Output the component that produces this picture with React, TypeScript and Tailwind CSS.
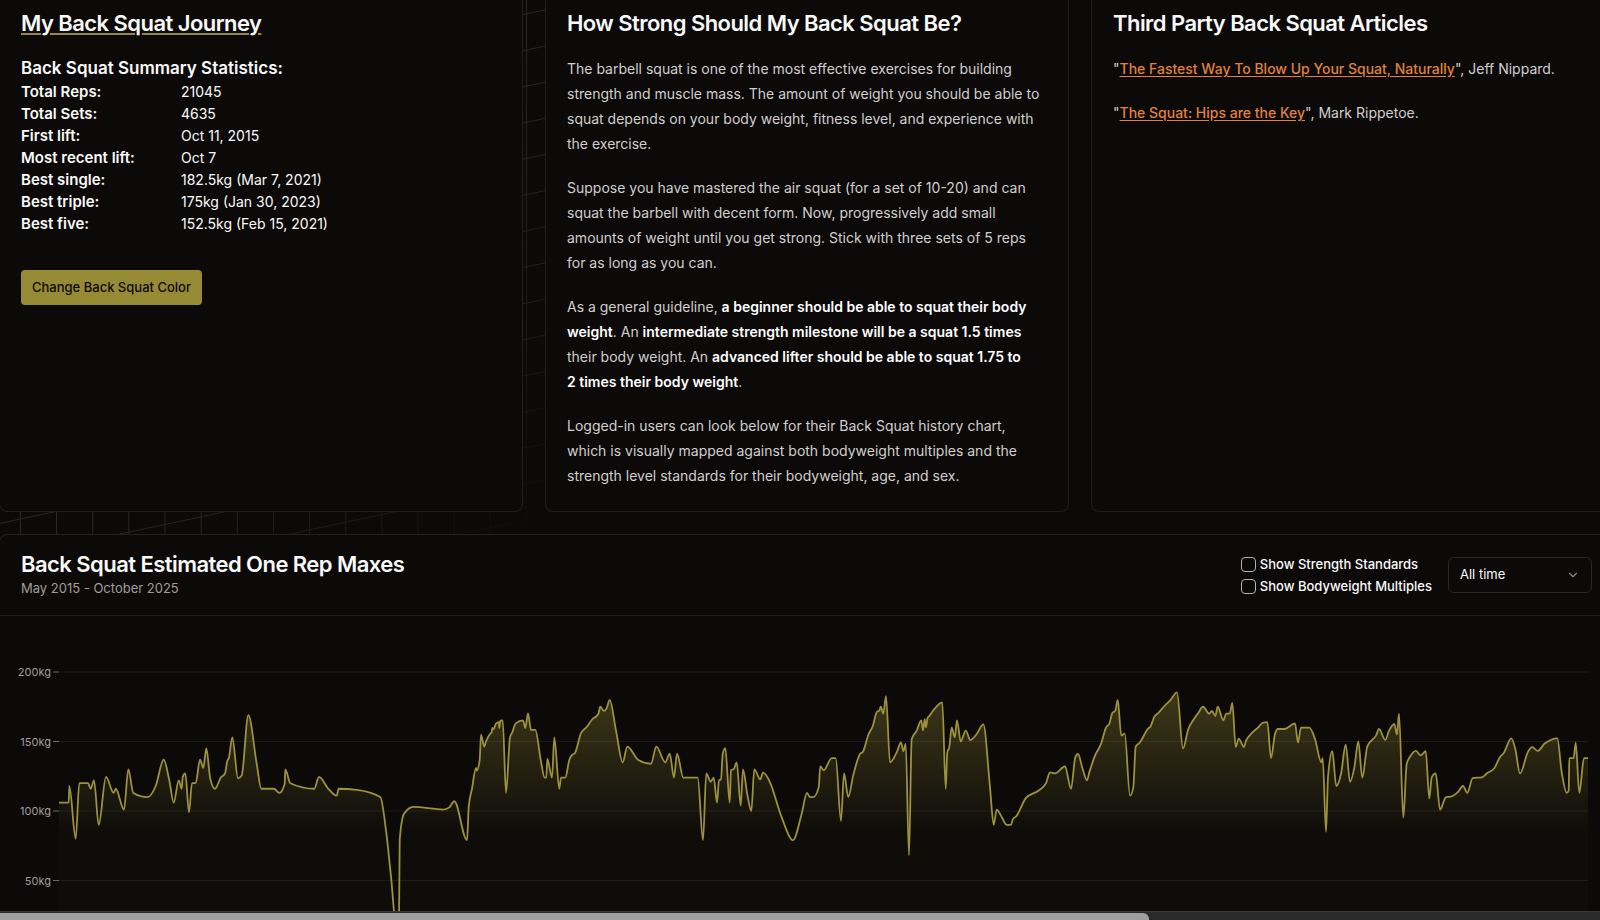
import React from 'react';
import { ChevronDown } from 'lucide-react';

const STATS: { label: string; value: string }[] = [
  { label: 'Total Reps:', value: '21045' },
  { label: 'Total Sets:', value: '4635' },
  { label: 'First lift:', value: 'Oct 11, 2015' },
  { label: 'Most recent lift:', value: 'Oct 7' },
  { label: 'Best single:', value: '182.5kg (Mar 7, 2021)' },
  { label: 'Best triple:', value: '175kg (Jan 30, 2023)' },
  { label: 'Best five:', value: '152.5kg (Feb 15, 2021)' },
];

// [x position, estimated one rep max in kg]
const E1RM: [number, number][] = [
  [59, 106], [68.7, 106], [69.3, 118], [75.7, 80], [79.3, 120], [88, 120], [90.7, 116], [94, 122], [98.7, 90],
  [106, 124.5], [113.7, 113], [115.7, 116], [124, 101], [128.3, 130], [133.3, 113], [147.7, 110], [155.7, 118],
  [163.7, 137], [169.3, 122], [173.7, 106], [178.7, 122], [181.7, 116], [182.7, 124.5], [185.3, 127], [189, 99],
  [192, 120], [195.7, 120], [200, 137], [203.3, 131], [206.3, 145], [210.3, 123], [215, 116], [220.7, 124],
  [225, 127], [227.3, 136], [229, 138.5], [232.3, 153], [238, 123.5], [241.7, 125.5], [248.3, 169], [256.7, 134],
  [261.3, 116], [274, 116], [279.3, 113], [284.7, 119.5], [285.3, 130], [290.3, 120], [314.3, 116], [319, 124.5],
  [328.3, 116], [336.7, 111], [338.7, 116], [356.7, 115.2], [380.3, 110], [386, 86], [390.7, 55], [396.7, 15],
  [399, 20], [399.7, 79], [404, 98], [413.3, 103], [443.3, 101], [449.3, 102.6], [454.3, 107], [467, 79],
  [468.7, 102.6], [472, 116], [476, 131], [476.7, 129], [479.7, 136.7], [481, 155], [484.3, 146.3], [486, 150],
  [490, 155.4], [491.7, 156.6], [492.3, 159.7], [493.7, 159], [495.7, 162.6], [498.7, 164], [499.3, 159.7],
  [500.3, 165], [502.7, 165.2], [506, 113], [510, 153], [512.3, 156.6], [515.7, 163], [523, 165.2], [525.3, 159.7],
  [528, 170.3], [531, 158.3], [535.3, 158.3], [540.7, 136.7], [544.7, 124], [546.3, 124], [547.3, 137.4], [552, 124],
  [554.3, 153], [559.3, 116], [561, 124], [565.3, 124], [569.3, 136.7], [572.3, 140.5], [574.7, 141.5], [581, 156],
  [586.7, 160.4], [592.3, 166], [598.3, 169.8], [600.3, 175], [604, 172], [606.7, 174], [609.7, 180], [616, 157.8],
  [622.7, 135], [627.3, 146.3], [638.3, 136.7], [651, 134], [656.3, 146.3], [665.3, 135], [669.7, 141.2], [674, 124],
  [677, 141.2], [683.3, 124], [697.7, 124], [703, 79], [706.3, 127], [710.7, 121], [713.7, 124], [717, 106],
  [719, 122.3], [721, 122.5], [722.7, 141], [725.3, 145.3], [729.7, 106], [731, 129.5], [733.7, 130], [736.7, 135],
  [740.7, 103.8], [743, 130], [747.3, 112], [751.3, 100], [754.3, 130], [760.3, 122.8], [763, 127.6], [770, 120.6],
  [781.7, 95.4], [793, 79], [801.7, 98], [807, 113], [810, 110], [813.3, 110], [818.7, 117], [820.3, 132],
  [823.7, 129.3], [831.7, 138], [835.7, 138], [841, 92.8], [844, 127], [848.3, 110], [853.3, 126], [860, 141],
  [863, 142.7], [868.3, 154.7], [872.7, 161], [877, 171.5], [879.3, 172.2], [880.7, 175], [883.3, 170], [886, 182.7],
  [890, 135], [896.7, 142.2], [901, 149.4], [903.3, 143], [905.7, 148.2], [909, 68], [911.7, 151.8], [916.7, 157.8],
  [921.3, 165.2], [923, 158], [924.7, 166], [926, 160.2], [927.7, 167.1], [929.3, 168.3], [933.3, 172.4],
  [942.3, 178.2], [945.7, 116], [947.3, 142.2], [949.3, 145.8], [951.7, 160.2], [954.7, 153], [957, 165.2],
  [960.7, 150], [965.7, 157.8], [970.3, 151], [976.7, 155.4], [983.3, 162.3], [990, 117], [993.7, 90], [996.7, 101],
  [1001.7, 95.7], [1006.7, 90], [1011, 90], [1012.7, 93.8], [1016.7, 96.6], [1026, 109.4], [1038.3, 114.6],
  [1046, 120], [1050, 127.8], [1055, 127], [1065, 132], [1071, 116], [1075.3, 138.6], [1078, 141], [1082.7, 130],
  [1087, 122], [1089.3, 127.8], [1095, 139.8], [1100.7, 147.7], [1106, 160], [1109.3, 162.6], [1112.3, 170.5],
  [1115.3, 172.2], [1117.7, 180], [1121.3, 154.2], [1124.7, 155.6], [1130, 111], [1133.3, 117], [1135.7, 146.3],
  [1140, 149.4], [1147.7, 159], [1150.7, 161], [1154, 167.4], [1158.3, 170.5], [1165, 176], [1170, 179.4],
  [1177, 185.4], [1183, 145], [1188.3, 159], [1193.3, 165.5], [1198.3, 170.5], [1203, 175], [1209.3, 170],
  [1212, 172], [1215.3, 168.3], [1217.7, 175], [1223.3, 165.2], [1226.3, 170], [1229.7, 170], [1232.3, 177.7],
  [1235.7, 146], [1238.7, 152], [1244, 146], [1246, 150.6], [1251.7, 156], [1258.3, 160.2], [1262.3, 163.3],
  [1267.3, 164], [1271, 138], [1275, 155.4], [1278, 159], [1284.3, 159], [1295, 163], [1298, 149.2], [1301, 160],
  [1309.3, 160], [1315, 151.8], [1321.3, 135], [1322.7, 138], [1326, 85], [1328, 124.2], [1332.3, 143],
  [1336.3, 118], [1341, 126.6], [1345.7, 147.7], [1350, 121], [1354.3, 131], [1358.3, 150], [1362.3, 124],
  [1367.3, 146.5], [1376, 154.2], [1379, 159], [1385.3, 151], [1388.7, 157.3], [1394.3, 162.6], [1397, 155],
  [1399, 170], [1403.3, 95.2], [1406.7, 133.8], [1410, 139], [1416, 143.2], [1420.7, 140], [1425.7, 143],
  [1429.3, 109], [1431.7, 124.2], [1435.7, 127], [1440, 101], [1446, 110], [1450.7, 110.3], [1458.3, 114],
  [1463, 118], [1467.3, 113], [1472.7, 123.7], [1481.7, 124.2], [1487.3, 127.3], [1494.3, 130.7], [1500, 138.8],
  [1504, 142], [1511.3, 152.3], [1515.3, 144.6], [1520, 127], [1527.7, 142.2], [1532.3, 146], [1537.7, 143.2],
  [1545, 148.7], [1557.3, 152.3], [1561.7, 127.8], [1566.7, 113], [1568.7, 114.6], [1569.3, 138], [1573.7, 138],
  [1575.7, 149.2], [1579.3, 113], [1584, 138], [1588, 138],
];

const Y_TICKS = [200, 150, 100, 50];
const BASELINE = 334;

const yFor = (kg: number) => BASELINE - kg * 1.39;

/** Monotone cubic path, so the line never overshoots a lift */
function monotonePath(points: [number, number][]) {
  const n = points.length;
  const slopes: number[] = [];
  for (let i = 0; i < n - 1; i++) {
    slopes.push((points[i + 1][1] - points[i][1]) / (points[i + 1][0] - points[i][0]));
  }
  const tangents = points.map((_, i) => {
    if (i === 0 || i === n - 1) return 0;
    const a = slopes[i - 1];
    const b = slopes[i];
    if (a * b <= 0) return 0;
    return Math.sign(a) * Math.min(Math.abs(a + b) / 2, 2 * Math.abs(a), 2 * Math.abs(b));
  });
  let d = `M${points[0][0]},${points[0][1]}`;
  for (let i = 0; i < n - 1; i++) {
    const [x0, y0] = points[i];
    const [x1, y1] = points[i + 1];
    const dx = (x1 - x0) / 3;
    d += `C${x0 + dx},${y0 + dx * tangents[i]},${x1 - dx},${y1 - dx * tangents[i + 1]},${x1},${y1}`;
  }
  return d;
}

function GridBackdrop() {
  return (
    <svg className="absolute inset-0 -z-10 h-full w-full" aria-hidden="true">
      <defs>
        <pattern
          id="grid"
          width="36.15"
          height="36.15"
          patternUnits="userSpaceOnUse"
          patternTransform="skewY(-12) translate(19.9 16.8)"
        >
          <path d="M0.5 0V36.15M0 0.5H36.15" fill="none" stroke="#32302e" />
        </pattern>
        <radialGradient id="fade" gradientUnits="userSpaceOnUse" cx="0" cy="0" r="760">
          <stop offset="0.65" stopColor="#fff" stopOpacity="0.9" />
          <stop offset="1" stopColor="#fff" stopOpacity="0" />
        </radialGradient>
        <mask id="grid-mask">
          <rect width="100%" height="100%" fill="url(#fade)" />
        </mask>
      </defs>
      <rect width="100%" height="100%" fill="url(#grid)" mask="url(#grid-mask)" />
    </svg>
  );
}

function InfoCard({ title, children }: { title: React.ReactNode; children: React.ReactNode }) {
  return (
    <section className="rounded-b-lg border border-t-0 border-[#22201e] bg-[#0c0a09] px-[21px] pt-2 pb-[23px]">
      <h2 className="mb-[18px] text-[22px] leading-[30px] font-semibold tracking-tight">{title}</h2>
      {children}
    </section>
  );
}

function JourneyCard() {
  return (
    <InfoCard
      title={
        <a href="#journey" className="underline decoration-[#968b34] decoration-2 underline-offset-2">
          My Back Squat Journey
        </a>
      }
    >
      <h3 className="text-[17px] leading-[25px] font-semibold">Back Squat Summary Statistics:</h3>
      <dl className="grid grid-cols-[160px_1fr] leading-[22px]">
        {STATS.map((s) => (
          <React.Fragment key={s.label}>
            <dt className="text-[15px] font-semibold">{s.label}</dt>
            <dd className="text-[14px]">{s.value}</dd>
          </React.Fragment>
        ))}
      </dl>
      <button
        type="button"
        className="mt-[35px] h-[35px] rounded bg-[#968b34] px-[11px] text-[13px] font-medium text-[#0c0a09]"
      >
        Change Back Squat Color
      </button>
    </InfoCard>
  );
}

function GuideCard() {
  return (
    <InfoCard title="How Strong Should My Back Squat Be?">
      <div className="flex flex-col gap-[19px] text-[14px] leading-[25px] text-[#d0cfcd] [&_strong]:font-semibold [&_strong]:text-white">
        <p>
          The barbell squat is one of the most effective exercises for building strength and muscle mass. The amount of
          weight you should be able to squat depends on your body weight, fitness level, and experience with the
          exercise.
        </p>
        <p>
          Suppose you have mastered the air squat (for a set of 10-20) and can squat the barbell with decent form. Now,
          progressively add small amounts of weight until you get strong. Stick with three sets of 5 reps for as long
          as you can.
        </p>
        <p>
          As a general guideline, <strong>a beginner should be able to squat their body weight</strong>. An{' '}
          <strong>intermediate strength milestone will be a squat 1.5 times</strong> their body weight. An{' '}
          <strong>advanced lifter should be able to squat 1.75 to 2&nbsp;times their body weight</strong>.
        </p>
        <p>
          Logged-in users can look below for their Back Squat history chart, which is visually mapped against both
          bodyweight multiples and the strength level standards for their bodyweight, age, and sex.
        </p>
      </div>
    </InfoCard>
  );
}

function ArticlesCard() {
  const link = 'font-medium text-[#e0813c] underline underline-offset-2';
  return (
    <InfoCard title="Third Party Back Squat Articles">
      <div className="flex flex-col gap-[19px] text-[14px] leading-[25px] text-[#d0cfcd]">
        <p>
          "<a href="#fastest-way" className={link}>The Fastest Way To Blow Up Your Squat, Naturally</a>", Jeff Nippard.
        </p>
        <p>
          "<a href="#hips" className={link}>The Squat: Hips are the Key</a>", Mark Rippetoe.
        </p>
      </div>
    </InfoCard>
  );
}

function CheckOption({ id, label }: { id: string; label: string }) {
  return (
    <div className="flex items-center gap-1">
      <input
        id={id}
        type="checkbox"
        className="size-[15px] appearance-none rounded-[4px] border border-[#b5b3b0] checked:bg-white"
      />
      <label htmlFor={id} className="text-[13px] leading-[14px] font-medium">
        {label}
      </label>
    </div>
  );
}

function E1rmChart() {
  const line = monotonePath(E1RM.map(([x, kg]) => [x, yFor(kg)]));
  return (
    <svg viewBox="0 0 1614 360" className="w-full" role="img" aria-label="Back Squat estimated one rep maxes over time">
      <defs>
        <linearGradient id="area" x1="0" y1="70" x2="0" y2="334" gradientUnits="userSpaceOnUse">
          <stop offset="0.05" stopColor="#968b34" stopOpacity="0.34" />
          <stop offset="0.55" stopColor="#968b34" stopOpacity="0.02" />
        </linearGradient>
      </defs>
      {Y_TICKS.map((kg) => (
        <g key={kg}>
          <line x1="59" x2="1588" y1={yFor(kg)} y2={yFor(kg)} stroke="#1d1b1a" />
          <line x1="53" x2="59" y1={yFor(kg)} y2={yFor(kg)} stroke="#6b6865" />
          <text x="51" y={yFor(kg) + 4} textAnchor="end" fontSize="11" fill="#a09d9a">
            {kg}kg
          </text>
        </g>
      ))}
      <path d={`${line}V${BASELINE}H59Z`} fill="url(#area)" />
      <path d={line} fill="none" stroke="#9c913d" strokeWidth="1.8" />
    </svg>
  );
}

function ChartCard() {
  return (
    <section className="min-h-0 flex-1 overflow-hidden rounded-t-lg border border-b-0 border-[#22201e] bg-[#0c0a09]">
      <header className="flex items-center justify-between border-b border-[#22201e] py-[18px] pr-[22px] pl-[21px]">
        <div className="flex flex-col gap-1">
          <h2 className="text-[22px] leading-[22px] font-semibold tracking-tight">
            Back Squat Estimated One Rep Maxes
          </h2>
          <p className="text-[13px] leading-[18px] text-[#a09d9a]">May 2015 - October 2025</p>
        </div>
        <div className="flex items-center gap-4">
          <div className="flex flex-col gap-[7px]">
            <CheckOption id="standards" label="Show Strength Standards" />
            <CheckOption id="multiples" label="Show Bodyweight Multiples" />
          </div>
          <div className="relative">
            <select
              aria-label="Time range"
              defaultValue="all"
              className="h-9 w-36 appearance-none rounded-md border border-[#292624] bg-transparent px-[11px] text-[13px]"
            >
              <option value="all">All time</option>
              <option value="year">Last year</option>
            </select>
            <ChevronDown className="pointer-events-none absolute top-[11px] right-3 size-[14px] text-[#8a8784]" />
          </div>
        </div>
      </header>
      <E1rmChart />
    </section>
  );
}

export default function App() {
  return (
    <div className="relative isolate flex h-screen flex-col overflow-hidden bg-[#0c0a09] font-['Inter',sans-serif] text-[#fafaf9]">
      <GridBackdrop />
      <main className="-mr-[15px] -ml-px flex min-h-0 flex-1 flex-col gap-[22px]">
        <div className="grid grid-cols-3 gap-[22px]">
          <JourneyCard />
          <GuideCard />
          <ArticlesCard />
        </div>
        <ChartCard />
      </main>
      <div className="h-[9px] shrink-0 border-t border-[#3a3a3a] bg-[#2a2a2a] pt-px">
        <div className="h-2 w-[71.8%] rounded-tr-md bg-[#9f9f9f]" />
      </div>
    </div>
  );
}
